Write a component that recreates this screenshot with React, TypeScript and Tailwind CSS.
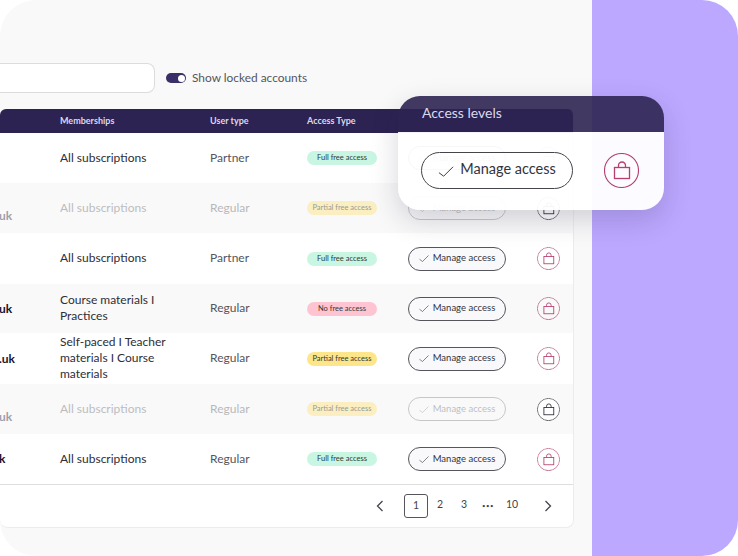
import React from 'react';

type Badge = 'full' | 'partial' | 'none';

interface RowData {
  email: string;
  memberships: string[];
  userType: string;
  badge: Badge;
  locked?: boolean;
  height: string;
}

const rows: RowData[] = [
  { email: '', memberships: ['All subscriptions'], userType: 'Partner', badge: 'full', height: 'h-[50px]' },
  { email: 'uk', memberships: ['All subscriptions'], userType: 'Regular', badge: 'partial', locked: true, height: 'h-[50px]' },
  { email: '', memberships: ['All subscriptions'], userType: 'Partner', badge: 'full', height: 'h-[51px]' },
  { email: 'uk', memberships: ['Course materials I', 'Practices'], userType: 'Regular', badge: 'none', height: 'h-[49px]' },
  { email: '.uk', memberships: ['Self-paced I Teacher', 'materials I Course', 'materials'], userType: 'Regular', badge: 'partial', height: 'h-[51px]' },
  { email: 'uk', memberships: ['All subscriptions'], userType: 'Regular', badge: 'partial', locked: true, height: 'h-[50px]' },
  { email: 'k', memberships: ['All subscriptions'], userType: 'Regular', badge: 'full', height: 'h-[50px]' },
];

const badgeStyles: Record<Badge, { label: string; className: string }> = {
  full: { label: 'Full free access', className: 'bg-[#c8f6e3]' },
  partial: { label: 'Partial free access', className: 'bg-[#fde58a]' },
  none: { label: 'No free access', className: 'bg-[#ffc4d2]' },
};

const CheckIcon = ({ className }: { className: string }) => (
  <svg viewBox="0 0 20 14" fill="none" className={className}>
    <path d="M1 8.5 L7 13 L19 1" stroke="currentColor" strokeWidth="1.2" />
  </svg>
);

const LockIcon = ({ className }: { className: string }) => (
  <svg viewBox="0 0 35 35" fill="none" className={className}>
    <circle cx="17.5" cy="17.5" r="17" stroke="currentColor" strokeWidth="1.1" />
    <rect x="10.5" y="14.5" width="15" height="11" stroke="currentColor" strokeWidth="1.3" />
    <path d="M14.5 14.5 V12.5 A3.5 3.5 0 0 1 21.5 12.5 V14.5" stroke="currentColor" strokeWidth="1.3" />
  </svg>
);

const Chevron = ({ right }: { right?: boolean }) => (
  <svg viewBox="0 0 8 12" fill="none" className="w-[8px] h-[12px] text-[#44444c]">
    <path d={right ? 'M1.5 1 L6.5 6 L1.5 11' : 'M6.5 1 L1.5 6 L6.5 11'} stroke="currentColor" strokeWidth="1.3" />
  </svg>
);

const TableRow = ({ row, shaded }: { row: RowData; shaded: boolean }) => {
  const badge = badgeStyles[row.badge];
  return (
    <div className={`flex items-center ${row.height} ${shaded ? 'bg-[#f9f9f9]' : 'bg-white'}`}>
      <div className={`w-[61px] -ml-px overflow-hidden text-[12px] font-bold text-[#17132e] ${row.locked ? 'opacity-40 pt-[16px]' : ''}`}>
        {row.email}
      </div>
      <div className={`w-[150px] pb-px text-[12px] leading-[16px] text-[#2e2e36] ${row.locked ? 'opacity-30' : ''}`}>
        {row.memberships.map((line) => (
          <div key={line}>{line}</div>
        ))}
      </div>
      <div className={`w-[97px] pb-px text-[12px] text-[#55555c] ${row.locked ? 'opacity-40' : ''}`}>{row.userType}</div>
      <div className="w-[101px]">
        <span
          className={`flex w-[70px] h-[14px] items-center justify-center rounded-full text-[7.5px] text-[#2f3a35] ${badge.className} ${row.locked ? 'opacity-50' : ''}`}
        >
          {badge.label}
        </span>
      </div>
      <div
        className={`flex w-[98px] h-[24px] items-center justify-center gap-[4px] rounded-full border border-[#55555c] bg-[#f9f9fb] text-[9.5px] text-[#33333b] ${row.locked ? 'opacity-30' : ''}`}
      >
        <CheckIcon className="w-[10px] h-[7px]" />
        Manage access
      </div>
      <LockIcon
        className={`w-[23px] h-[23px] ml-[31px] rounded-full ${row.locked ? 'text-[#2e2e36] bg-white' : 'text-[#b5406f]'}`}
      />
    </div>
  );
};

export default function App() {
  return (
    <div className="w-[738px] h-[556px] bg-white [font-family:Lato,sans-serif]">
      <div className="relative flex h-full overflow-hidden rounded-[36px]">
        <main className="flex w-[592px] shrink-0 flex-col items-end bg-[#f9f9f9] pr-[18px] pt-[63px]">
          <div className="flex w-[574px] items-center">
            <div className="h-[30px] w-[155px] rounded-r-lg border border-l-0 border-[#dcdcde] bg-white" />
            <div className="ml-[11px] flex h-[10px] w-[20px] items-center justify-end rounded-full bg-[#3a2f66] pr-[1.5px]">
              <div className="h-[7px] w-[7px] rounded-full bg-white" />
            </div>
            <span className="ml-[6px] text-[11.9px] text-[#55555c]">Show locked accounts</span>
          </div>

          <div className="mt-[16px] w-[574px] overflow-hidden rounded-b-lg rounded-t-md border-b border-r border-[#ececee] bg-white">
            <div className="flex h-[24px] items-center bg-[#2d2352] text-[9px] font-bold text-[#dcd8ec]">
              <div className="w-[60px]" />
              <div className="w-[150px]">Memberships</div>
              <div className="w-[97px]">User type</div>
              <div>Access Type</div>
            </div>

            {rows.map((row, i) => (
              <TableRow key={i} row={row} shaded={i % 2 === 1} />
            ))}

            <div className="flex h-[43px] items-center border-t border-[#dedee0] text-[10.5px] text-[#44444c]">
              <div className="ml-[376px]">
                <Chevron />
              </div>
              <div className="ml-[20px] flex h-[24px] w-[24px] items-center justify-center rounded-[3px] border border-[#55555c]">1</div>
              <div className="flex h-[24px] w-[24px] items-center justify-center pb-[2px]">2</div>
              <div className="flex h-[24px] w-[24px] items-center justify-center pb-[2px]">3</div>
              <div className="flex h-[24px] w-[24px] items-center justify-center pb-[2px] text-[6px] tracking-[0.5px]">•••</div>
              <div className="flex h-[24px] w-[24px] items-center justify-center pb-[2px]">10</div>
              <div className="ml-[20px]">
                <Chevron right />
              </div>
            </div>
          </div>
        </main>

        <aside className="flex-1 bg-[#bca8ff]" />

        <div className="absolute left-[398px] top-[96px] w-[266px] overflow-hidden rounded-[22px] shadow-[0_10px_28px_rgba(30,20,60,0.18)]">
          <div className="flex h-[36px] items-center bg-[#2d2352]/90 pb-[3px] pl-[24px] text-[14px] text-[#dcd8ec]">Access levels</div>
          <div className="flex h-[78px] items-center bg-white/95 pb-[2px] pl-[23px]">
            <div className="flex h-[37px] w-[152px] items-center justify-center gap-[6px] rounded-full border border-[#44444c] bg-white/40 pb-[2px] text-[14.5px] text-[#33333b]">
              <CheckIcon className="w-[16px] h-[11px] mt-[5px]" />
              Manage access
            </div>
            <LockIcon className="ml-[31px] w-[35px] h-[35px] text-[#b5406f]" />
          </div>
        </div>
      </div>
    </div>
  );
}
